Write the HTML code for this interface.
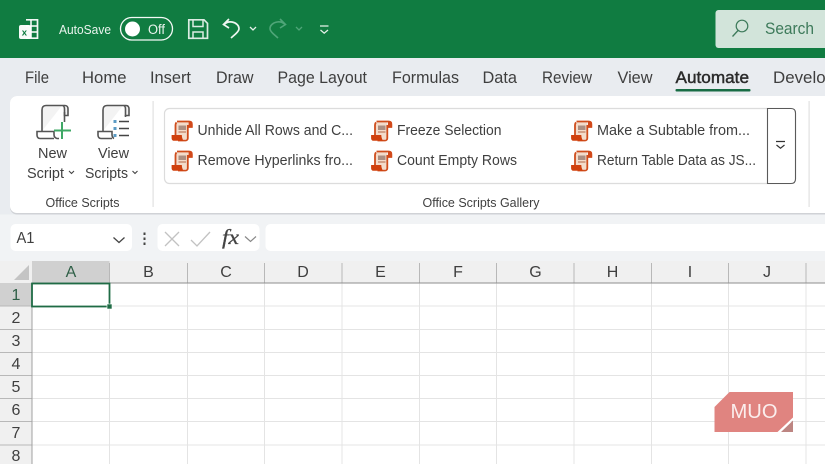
<!DOCTYPE html>
<html><head><meta charset="utf-8"><style>
html,body{margin:0;padding:0;width:825px;height:464px;overflow:hidden;background:#fff}
svg{display:block}
text{font-family:"Liberation Sans",sans-serif;fill:#3f3f3f}
</style></head><body>
<svg width="825" height="464" viewBox="0 0 825 464" xmlns="http://www.w3.org/2000/svg">
<defs>
<g id="sc">
<path d="M5 2h12v17H5z" fill="#f3dccb"/>
<path d="M6 1.500h12c1.800 0 2.800 1 2.800 2.800V7H17" fill="none" stroke="#cf4d1c" stroke-width="1.800"/>
<path d="M5.500 2.500c-.6.500-1 1.200-1 2.500v10" fill="none" stroke="#cf4d1c" stroke-width="1.800"/>
<path d="M17.500 1.200h2.200c1.100 0 1.900.8 1.900 2.100v3.900h-4.100z" fill="#d2491a"/>
<path d="M7.500 5.500h7.500v4.500H7.500z" fill="#ab8f82"/>
<path d="M7.500 11.300h7.500v1.400H7.500z" fill="#c58a6d"/>
<path d="M16.800 5v13.200c0 1.200-.9 2.300-2.300 2.300H7" fill="none" stroke="#cf4d1c" stroke-width="1.800"/>
<path d="M.6 15h10.200c0 2.200.6 3.800 1.700 5.800H3c-1.700 0-2.400-1.300-2.400-2.800z" fill="#d0400d"/>
</g>
</defs>

<rect width="825" height="464" fill="#fff"/>
<!-- title bar -->
<rect width="825" height="58" fill="#107c41"/>
<path d="M26 19.800h11.500v18.400H26" fill="none" stroke="#fff" stroke-width="1.700" opacity=".95"/>
<path d="M31 20v18M26 26h11M31 32h6" stroke="#fff" stroke-width="1.500" fill="none"/>
<rect x="19" y="25" width="11.500" height="14" rx="2" fill="#fff" opacity=".97"/>
<text x="21.800" y="35.500" font-size="9.500" style="fill:#107c41" font-weight="bold">x</text>
<text x="59" y="34" font-size="13" textLength="52" lengthAdjust="spacingAndGlyphs" style="fill:#eaf4ee">AutoSave</text>
<rect x="120.500" y="17.500" width="52" height="22.500" rx="11.200" fill="none" stroke="#f4f9f6" stroke-width="1.300"/>
<circle cx="132.500" cy="29" r="7.500" fill="#fff"/>
<text x="148" y="34" font-size="13.500" textLength="17" lengthAdjust="spacingAndGlyphs" style="fill:#eaf4ee">Off</text>
<path d="M188.800 19.800h15.200l3.500 3.500v15H188.800z" fill="none" stroke="#dcece3" stroke-width="1.700"/>
<path d="M193 20v6.500h10V20M193 38v-6h10v6" fill="none" stroke="#dcece3" stroke-width="1.500"/>
<path d="M229 19l-5.500 5.500 5.500 3.500M224 24.500c2-2 5-3 8-2.500 4 .700 7 3.500 7 6.500 0 2.500-2 4-3.500 5.500L231 38" fill="none" stroke="#eef6f1" stroke-width="1.700"/>
<path d="M250 27l3 3 3-3" fill="none" stroke="#e6f1ea" stroke-width="1.300"/>
<path d="M280 19l5.500 5.500-5.500 3.500M285 24.500c-2-2-5-3-8-2.500-4 .700-7 3.500-7 6.500 0 2.500 2 4 3.500 5.500L278 38" fill="none" stroke="#4fa578" stroke-width="1.600"/>
<path d="M296 27l3 3 3-3" fill="none" stroke="#4fa578" stroke-width="1.300"/>
<path d="M320 26h8.500M320.500 30l3.700 3.200 3.800-3.200" fill="none" stroke="#e6f1ea" stroke-width="1.300"/>
<!-- search -->
<rect x="715.500" y="10" width="115" height="38" rx="3" fill="#d2e4da"/>
<circle cx="742" cy="26" r="5.800" fill="none" stroke="#3d7a5a" stroke-width="1.200"/>
<path d="M738 30.500l-5.500 6" stroke="#3d7a5a" stroke-width="1.300" fill="none"/>
<text x="765" y="34" font-size="17" textLength="49" lengthAdjust="spacingAndGlyphs" style="fill:#3d7a5a">Search</text>

<!-- tab bar -->
<rect y="58" width="825" height="165" fill="#e9ecf0"/>
<g font-size="16.500">
<text x="25" y="83" textLength="24" lengthAdjust="spacingAndGlyphs">File</text>
<text x="82" y="83" textLength="44.500" lengthAdjust="spacingAndGlyphs">Home</text>
<text x="150" y="83" textLength="41" lengthAdjust="spacingAndGlyphs">Insert</text>
<text x="216" y="83" textLength="37.500" lengthAdjust="spacingAndGlyphs">Draw</text>
<text x="277.500" y="83" textLength="89.500" lengthAdjust="spacingAndGlyphs">Page Layout</text>
<text x="392" y="83" textLength="67" lengthAdjust="spacingAndGlyphs">Formulas</text>
<text x="482.500" y="83" textLength="34.500" lengthAdjust="spacingAndGlyphs">Data</text>
<text x="542" y="83" textLength="50" lengthAdjust="spacingAndGlyphs">Review</text>
<text x="617.500" y="83" textLength="35" lengthAdjust="spacingAndGlyphs">View</text>
<text x="675.500" y="83" textLength="73.500" lengthAdjust="spacingAndGlyphs" stroke="#2b2b2b" stroke-width=".45" style="fill:#2b2b2b">Automate</text>
<text x="773" y="83" textLength="62" lengthAdjust="spacingAndGlyphs">Develop</text>
</g>
<rect x="675.500" y="89" width="75" height="2.500" rx="1" fill="#176c44"/>

<!-- ribbon -->
<rect x="10" y="96" width="830" height="118.500" rx="7" fill="#c4c7cb" opacity=".7"/>
<rect x="10" y="96" width="830" height="117" rx="7" fill="#fff"/>
<rect x="152.500" y="101" width="1.200" height="106" fill="#e2e2e2"/>
<rect x="808.500" y="101" width="1.200" height="106" fill="#e2e2e2"/>

<!-- New Script icon -->
<path d="M42 131V110c0-3 1.500-4.500 4-4.500h19c2 0 3 1.500 3 3.500v6.500h-3.500V109c0-2-1-3.500-2.500-3.500" fill="#f3f3f3" stroke="#555" stroke-width="1.600"/>
<path d="M64.500 112v10" stroke="#555" stroke-width="1.600"/>
<path d="M54 138.500H40c-2 0-3-1.500-3-3.500v-3.500h17v3c0 2 1 3.500 3 4h2" fill="#fff" stroke="#555" stroke-width="1.600"/>
<path d="M62 122v17M54 130.500h17" stroke="#3fa866" stroke-width="2"/>
<!-- View Scripts icon -->
<path d="M103 131V110c0-3 1.500-4.500 4-4.500h19c2 0 3 1.500 3 3.500v6.500h-3.500V109c0-2-1-3.500-2.500-3.500" fill="#f3f3f3" stroke="#555" stroke-width="1.600"/>
<path d="M125.500 115v2" stroke="#555" stroke-width="1.600"/>
<path d="M112 138.500h-11c-2 0-3-1.500-3-3.500v-3.500h14v3c0 2 1 3.500 2 4" fill="#fff" stroke="#555" stroke-width="1.600"/>
<rect x="113.500" y="120" width="3" height="3" fill="#5b9bc4"/><rect x="113.500" y="127" width="3" height="3" fill="#5b9bc4"/><rect x="113.500" y="134" width="3" height="3" fill="#5b9bc4"/>
<path d="M119 121.500h10M119 128.500h10M119 135.500h10" stroke="#444" stroke-width="1.400"/>

<g font-size="15">
<text x="38" y="158" textLength="29" lengthAdjust="spacingAndGlyphs">New</text>
<text x="27" y="178" textLength="37" lengthAdjust="spacingAndGlyphs">Script</text>
<text x="98" y="158" textLength="31" lengthAdjust="spacingAndGlyphs">View</text>
<text x="85" y="178" textLength="43" lengthAdjust="spacingAndGlyphs">Scripts</text>
</g>
<path d="M69 171l2.500 2.500 2.500-2.500M132.500 171l2.500 2.500 2.500-2.500" fill="none" stroke="#444" stroke-width="1.100"/>
<text x="45.500" y="207" font-size="13" textLength="74" lengthAdjust="spacingAndGlyphs">Office Scripts</text>
<text x="422.500" y="207" font-size="13" textLength="117" lengthAdjust="spacingAndGlyphs">Office Scripts Gallery</text>

<!-- gallery -->
<rect x="164.500" y="108.500" width="631" height="75" rx="5" fill="#fff" stroke="#dcdcdc" stroke-width="1.200"/>
<path d="M767.500 108.500h23.500c3 0 4.500 1.500 4.500 4.500v66c0 3-1.500 4.500-4.500 4.500h-23.500z" fill="#fff" stroke="#5a5a5a" stroke-width="1.100"/>
<path d="M776 141.500h9M776.500 145l4 3.200 4-3.200" fill="none" stroke="#333" stroke-width="1.200"/>

<use href="#sc" x="171" y="120"/>
<use href="#sc" x="171" y="150"/>
<use href="#sc" x="370.500" y="120"/>
<use href="#sc" x="370.500" y="150"/>
<use href="#sc" x="570.500" y="120"/>
<use href="#sc" x="570.500" y="150"/>
<g font-size="15">
<text x="197.500" y="135" textLength="155.500" lengthAdjust="spacingAndGlyphs">Unhide All Rows and C...</text>
<text x="197.500" y="165" textLength="155.500" lengthAdjust="spacingAndGlyphs">Remove Hyperlinks fro...</text>
<text x="397" y="135" textLength="104.500" lengthAdjust="spacingAndGlyphs">Freeze Selection</text>
<text x="397" y="165" textLength="120" lengthAdjust="spacingAndGlyphs">Count Empty Rows</text>
<text x="597" y="135" textLength="153" lengthAdjust="spacingAndGlyphs">Make a Subtable from...</text>
<text x="597" y="165" textLength="159" lengthAdjust="spacingAndGlyphs">Return Table Data as JS...</text>
</g>

<!-- formula bar -->
<rect y="214.500" width="825" height="47" fill="#f1f3f5"/>
<rect x="10.500" y="224" width="121.500" height="27" rx="5" fill="#fff"/>
<text x="16.500" y="243" font-size="15.500" textLength="18" lengthAdjust="spacingAndGlyphs">A1</text>
<path d="M113.500 237.500l5.500 5 5.500-5" fill="none" stroke="#444" stroke-width="1.300"/>
<path d="M144.500 232.500v2.500M144.500 237.500v2.500M144.500 242.500v2.500" stroke="#444" stroke-width="2"/>
<rect x="157.500" y="224" width="102" height="27" rx="5" fill="#fff"/>
<path d="M165 232l14 14M179 232l-14 14" stroke="#c2c2c2" stroke-width="1.300"/>
<path d="M191 240l6 6 13-14" fill="none" stroke="#c2c2c2" stroke-width="1.300"/>
<text x="222" y="244" font-size="21" font-style="italic" textLength="17" lengthAdjust="spacingAndGlyphs" stroke="#444" stroke-width=".3" style="font-family:'Liberation Serif',serif;fill:#444">fx</text>
<path d="M245 236.500l5.500 5 5.500-5" fill="none" stroke="#888" stroke-width="1.200"/>
<rect x="265.500" y="224" width="570" height="27" rx="5" fill="#fff"/>

<!-- sheet headers -->
<rect y="261" width="825" height="22" fill="#f0f0f0"/>
<rect y="283" width="32" height="181" fill="#f0f0f0"/>
<path d="M29 265v15H14z" fill="#c4c4c4"/>
<rect x="32" y="261" width="77.500" height="22" fill="#d0d0d0"/>
<rect y="283" width="32" height="23" fill="#d0d0d0"/>
<!-- grid -->
<g stroke="#e4e4e4" stroke-width="1">
<path d="M187.500 283V464M264.500 283V464M342 283V464M419.500 283V464M496.500 283V464M574 283V464M651.500 283V464M728.500 283V464M806 283V464M109.500 283V464"/>
<path d="M32 306H825M32 329.500H825M32 352.500H825M32 375.500H825M32 398.500H825M32 421.500H825M32 445H825"/>
</g>
<g stroke="#b8b8b8" stroke-width="1">
<path d="M109.500 263V283M187.500 263V283M264.500 263V283M342 263V283M419.500 263V283M496.500 263V283M574 263V283M651.500 263V283M728.500 263V283M806 263V283"/>
<path d="M0 306H32M0 329.500H32M0 352.500H32M0 375.500H32M0 398.500H32M0 421.500H32M0 445H32"/>
</g>
<rect x="32" y="282.500" width="793" height="1" fill="#8e8e8e"/>
<rect x="31.500" y="283" width="1" height="181" fill="#a0a0a0"/>
<g font-size="16" text-anchor="middle">
<text x="71" y="277" style="fill:#2f5f47">A</text>
<text x="148.500" y="277">B</text>
<text x="226" y="277">C</text>
<text x="303" y="277">D</text>
<text x="380.500" y="277">E</text>
<text x="458" y="277">F</text>
<text x="535.500" y="277">G</text>
<text x="612.500" y="277">H</text>
<text x="690" y="277">I</text>
<text x="767" y="277">J</text>
<text x="16" y="300" style="fill:#2f5f47">1</text>
<text x="16" y="323">2</text>
<text x="16" y="346">3</text>
<text x="16" y="369">4</text>
<text x="16" y="392">5</text>
<text x="16" y="415">6</text>
<text x="16" y="438">7</text>
<text x="16" y="461">8</text>
</g>
<!-- selection -->
<rect x="32" y="283.500" width="77.500" height="23" fill="#fff" stroke="#1f6b45" stroke-width="1.800"/>
<rect x="107" y="304" width="5" height="5" fill="#1f6b45" stroke="#fff" stroke-width=".6"/>

<!-- watermark -->
<path d="M714.500 407l15-15h63.500v26l-15 14h-63.500z" fill="#e08480"/>
<path d="M781 432l12-11.500V432z" fill="#bd8582"/>
<path d="M778 432.500l15.500-14.500" stroke="#fff" stroke-width="1.500"/>
<text x="730.500" y="418" font-size="20.500" textLength="47" lengthAdjust="spacingAndGlyphs" style="fill:#fbeeed">MUO</text>
</svg>
</body></html>
